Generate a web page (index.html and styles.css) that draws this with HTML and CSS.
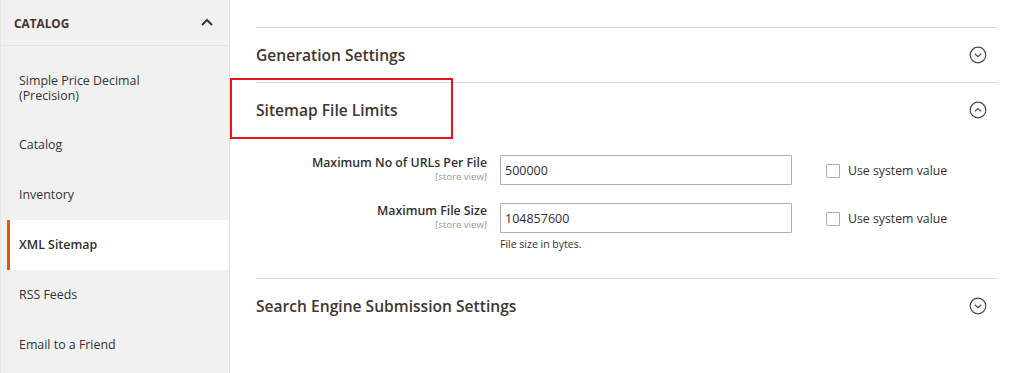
FILE: index.html
```html
<!DOCTYPE html>
<html lang="en">
<head>
  <meta charset="UTF-8">
  <title>XML Sitemap - Configuration</title>
  <link rel="stylesheet" href="styles.css">
</head>
<body>
  <div class="page">
    <!-- Left config navigation -->
    <nav class="page-nav">
      <div class="nav-title">
        <span>Catalog</span>
        <svg class="nav-chevron" width="14" height="14" viewBox="0 0 14 14"><path d="M2 10 L7 5 L12 10" fill="none" stroke="#41362f" stroke-width="2"/></svg>
      </div>
      <ul class="nav-items">
        <li class="nav-item first"><a href="#">Simple Price Decimal (Precision)</a></li>
        <li class="nav-item"><a href="#">Catalog</a></li>
        <li class="nav-item"><a href="#">Inventory</a></li>
        <li class="nav-item active"><a href="#">XML Sitemap</a></li>
        <li class="nav-item"><a href="#">RSS Feeds</a></li>
        <li class="nav-item"><a href="#">Email to a Friend</a></li>
      </ul>
    </nav>

    <!-- Config sections -->
    <main class="main">
      <section class="block">
        <div class="block-title">
          <span>Generation Settings</span>
          <svg class="toggle" width="18" height="18" viewBox="0 0 18 18"><circle cx="9" cy="9" r="7.8" fill="none" stroke="#514943" stroke-width="1.2"/><path d="M5.8 7.8 L9 10.6 L12.2 7.8" fill="none" stroke="#514943" stroke-width="1.2"/></svg>
        </div>
      </section>

      <section class="block open">
        <div class="block-title">
          <span>Sitemap File Limits</span>
          <svg class="toggle" width="18" height="18" viewBox="0 0 18 18"><circle cx="9" cy="9" r="7.8" fill="none" stroke="#514943" stroke-width="1.2"/><path d="M5.8 10.4 L9 7.6 L12.2 10.4" fill="none" stroke="#514943" stroke-width="1.2"/></svg>
        </div>
        <div class="highlight"></div>
        <div class="fieldset">
          <div class="field">
            <div class="field-label">
              <label>Maximum No of URLs Per File</label>
              <span class="scope">[store view]</span>
            </div>
            <div class="field-control">
              <input class="input-text" type="text" value="500000">
            </div>
            <label class="use-default"><span class="checkbox"></span>Use system value</label>
          </div>
          <div class="field">
            <div class="field-label">
              <label>Maximum File Size</label>
              <span class="scope">[store view]</span>
            </div>
            <div class="field-control">
              <input class="input-text" type="text" value="104857600">
              <p class="note">File size in bytes.</p>
            </div>
            <label class="use-default"><span class="checkbox"></span>Use system value</label>
          </div>
        </div>
      </section>

      <section class="block">
        <div class="block-title">
          <span>Search Engine Submission Settings</span>
          <svg class="toggle" width="18" height="18" viewBox="0 0 18 18"><circle cx="9" cy="9" r="7.8" fill="none" stroke="#514943" stroke-width="1.2"/><path d="M5.8 7.8 L9 10.6 L12.2 7.8" fill="none" stroke="#514943" stroke-width="1.2"/></svg>
        </div>
      </section>
    </main>
  </div>
</body>
</html>
```

FILE: styles.css
```css
body {
  margin: 0;
  font-family: "Open Sans", "Liberation Sans", sans-serif;
  color: #303030;
  background: #fff;
}
.page {
  display: flex;
  height: 373px;
  overflow: hidden;
}

/* sidebar */
.page-nav {
  width: 228px;
  flex-shrink: 0;
  background: #f1f1f1;
  border-left: 1px solid #e6e6e6;
  border-right: 1px solid #e3e3e3;
}
.nav-title {
  height: 45px;
  display: flex;
  align-items: center;
  justify-content: space-between;
  padding: 0 15px 0 13px;
  border-bottom: 1px solid #e3e3e3;
  font-size: 11.8px;
  font-weight: 700;
  text-transform: uppercase;
  color: #41362f;
}
.nav-chevron {
  margin-top: -1px;
}
.nav-items {
  list-style: none;
  margin: 0;
  padding: 0;
}
.nav-item a {
  display: block;
  padding: 0 18px;
  height: 50px;
  line-height: 50px;
  font-size: 12.4px;
  color: #333;
  text-decoration: none;
}
.nav-item.first a {
  height: auto;
  line-height: 15px;
  padding: 27px 40px 17px 18px;
}
.nav-item.active {
  margin-left: 6px;
  background: #fff;
  border-left: 3px solid #eb5202;
}
.nav-item.active a {
  padding-left: 9px;
  font-weight: 600;
  color: #303030;
}

/* main */
.main {
  flex: 1;
  padding: 27px 27px 0 26px;
}
.block {
  border-top: 1px solid #dadada;
  position: relative;
}
.block-title {
  height: 54px;
  display: flex;
  align-items: center;
  justify-content: space-between;
  padding-right: 10px;
  font-size: 15.6px;
  font-weight: 600;
  color: #41362f;
}
.highlight {
  position: absolute;
  left: -26px;
  top: -5px;
  width: 219px;
  height: 57px;
  border: 2px solid #e8141c;
  pointer-events: none;
}
.fieldset {
  padding: 18px 0 26px;
}
.field {
  display: flex;
  align-items: flex-start;
  margin-bottom: 18px;
}
.field:last-child {
  margin-bottom: 0;
}
.field-label {
  width: 231px;
  height: 30px;
  text-align: right;
  display: flex;
  flex-direction: column;
}
.field-label label {
  font-size: 12.3px;
  font-weight: 600;
  color: #303030;
  line-height: 16px;
}
.scope {
  font-size: 9.6px;
  color: #999;
  line-height: 12px;
}
.field-control {
  margin-left: 13px;
  width: 292px;
}
.input-text {
  box-sizing: border-box;
  width: 100%;
  height: 30px;
  border: 1px solid #adadad;
  border-radius: 1px;
  padding: 0 4px;
  font-family: inherit;
  font-size: 12.5px;
  color: #303030;
}
.note {
  margin: 4px 0 0;
  font-size: 10.5px;
  line-height: 15px;
  color: #303030;
}
.use-default {
  margin-left: 34px;
  display: flex;
  align-items: center;
  height: 30px;
  font-size: 12.3px;
  color: #303030;
}
.checkbox {
  box-sizing: border-box;
  width: 14px;
  height: 14px;
  border: 1px solid #adadad;
  border-radius: 1px;
  background: #fff;
  margin-right: 8px;
  margin-top: 2px;
}
```
